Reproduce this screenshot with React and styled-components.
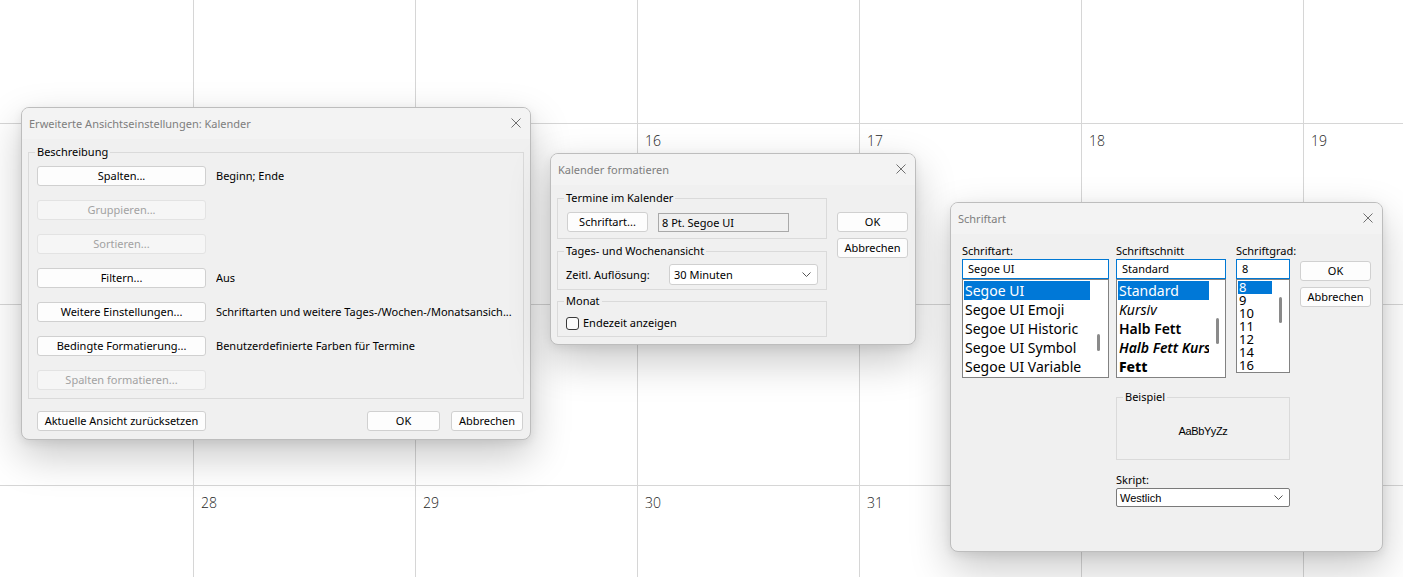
import React from "react";
import styled, { createGlobalStyle } from "styled-components";

const UI_FONT = `"Noto Sans", "Segoe UI", sans-serif`;
const CLASSIC_FONT = `"Liberation Sans", Arial, sans-serif`;

const GlobalStyle = createGlobalStyle`
  html, body { margin: 0; padding: 0; background: #fff; }
  body { overflow: hidden; font-family: ${UI_FONT}; }
  *, *::before, *::after { box-sizing: border-box; }
`;

/* ---------- Calendar background ---------- */

const Desktop = styled.div`
  position: relative;
  width: 1403px;
  height: 577px;
  overflow: hidden;
  background: #fff;
`;

const CalendarGrid = styled.div`
  display: grid;
  grid-template-columns: 193px repeat(5, 222px) 1fr;
  grid-template-rows: 123px 181px 181px 1fr;
  height: 100%;
`;

const DayCell = styled.div`
  border-left: ${({ $firstCol }) => ($firstCol ? "none" : "1px solid #d6d6d6")};
  border-top: ${({ $firstRow }) => ($firstRow ? "none" : "1px solid #d6d6d6")};
  padding: 8px 0 0 7px;
  font-family: "Open Sans", "Segoe UI", sans-serif;
  font-weight: 300;
  font-size: 14px;
  line-height: 18px;
  color: #1e1e1e;
`;

const weeks = [
  ["", "", "", "", "", "", ""],
  ["", "14", "15", "16", "17", "18", "19"],
  ["", "21", "22", "23", "24", "25", "26"],
  ["", "28", "29", "30", "31", "1", "2"],
];

/* ---------- Window chrome ---------- */

const Window = styled.section`
  position: absolute;
  left: ${({ $x }) => $x}px;
  top: ${({ $y }) => $y}px;
  width: ${({ $w }) => $w}px;
  height: ${({ $h }) => $h}px;
  display: flex;
  flex-direction: column;
  background: #f0f0f0;
  border: 1px solid #bdbdbd;
  border-radius: 8px;
  overflow: hidden;
  box-shadow: 0 16px 40px rgba(0, 0, 0, 0.22), 0 3px 10px rgba(0, 0, 0, 0.08);
  font-family: ${UI_FONT};
  font-size: 11px;
  line-height: 14px;
  color: #000;
`;

const TitleBar = styled.header`
  flex: none;
  height: 31px;
  display: flex;
  align-items: center;
  justify-content: space-between;
  padding: 0 9px 0 7px;
  background: #f3f3f3;
`;

const Title = styled.span`
  color: #7e7e7e;
  font-size: 11px;
`;

const CloseButton = styled.span`
  display: flex;
  width: 10px;
  height: 10px;
  margin-top: -2px;
`;

const CloseGlyph = () => (
  <CloseButton>
    <svg width="10" height="10" viewBox="0 0 10 10">
      <path d="M0.5 0.5L9.5 9.5M9.5 0.5L0.5 9.5" stroke="#6f6f6f" strokeWidth="1" />
    </svg>
  </CloseButton>
);

const Group = styled.fieldset`
  margin: ${({ $mt = 0 }) => $mt}px 0 0 0;
  padding: 0;
  border: 1px solid #dadada;
  min-width: 0;
`;

const Legend = styled.legend`
  margin-left: 6px;
  padding: 0 2px;
  font-size: 11px;
  line-height: 14px;
`;

const GroupContent = styled.div`
  padding: ${({ $pad }) => $pad};
`;

const Button = styled.button`
  flex: none;
  width: ${({ $w }) => $w}px;
  height: 20px;
  margin: 0;
  padding: 0;
  font-family: inherit;
  font-size: 11px;
  line-height: 18px;
  color: #000;
  background: #fdfdfd;
  border: 1px solid #d0d0d0;
  border-radius: 3px;
  &:disabled {
    color: #a2a2a2;
    background: #f6f6f6;
    border-color: #e3e3e3;
  }
`;

const Chevron = () => (
  <svg width="9" height="5" viewBox="0 0 9 5">
    <path d="M0.5 0.5L4.5 4.5L8.5 0.5" fill="none" stroke="#555" strokeWidth="1" />
  </svg>
);

const ComboBox = styled.div`
  flex: none;
  width: ${({ $w }) => $w}px;
  height: ${({ $h }) => $h}px;
  display: flex;
  align-items: center;
  justify-content: space-between;
  padding: 0 6px 0 ${({ $classic }) => ($classic ? 3 : 4)}px;
  background: #fff;
  border: 1px solid ${({ $classic }) => ($classic ? "#7a7a7a" : "#d0d0d0")};
  border-radius: ${({ $classic }) => ($classic ? 2 : 3)}px;
  font-family: ${({ $classic }) => ($classic ? CLASSIC_FONT : UI_FONT)};
  font-size: 11px;
`;

/* ---------- Dialog 1: Erweiterte Ansichtseinstellungen ---------- */

const SettingsBody = styled.div`
  flex: 1;
  padding: 6px 6px 8px 6px;
`;

const SettingsList = styled.div`
  display: flex;
  flex-direction: column;
  gap: 14px;
`;

const SettingRow = styled.div`
  display: flex;
  align-items: center;
  gap: 10px;
`;

const RowValue = styled.span`
  white-space: nowrap;
  overflow: hidden;
`;

const Footer = styled.div`
  display: flex;
  align-items: center;
  margin-top: 12px;
  padding: 0 1px 0 9px;
`;

const FooterActions = styled.div`
  display: flex;
  gap: 11px;
  margin-left: auto;
`;

const settings = [
  { label: "Spalten...", value: "Beginn; Ende" },
  { label: "Gruppieren...", disabled: true },
  { label: "Sortieren...", disabled: true },
  { label: "Filtern...", value: "Aus" },
  { label: "Weitere Einstellungen...", value: "Schriftarten und weitere Tages-/Wochen-/Monatsansich..." },
  { label: "Bedingte Formatierung...", value: "Benutzerdefinierte Farben für Termine" },
  { label: "Spalten formatieren...", disabled: true },
];

/* ---------- Dialog 2: Kalender formatieren ---------- */

const FormatBody = styled.div`
  flex: 1;
  display: flex;
  gap: 10px;
  padding: 6px 7px 6px 6px;
`;

const GroupColumn = styled.div`
  width: 270px;
  display: flex;
  flex-direction: column;
`;

const ActionColumn = styled.div`
  display: flex;
  flex-direction: column;
  gap: 6px;
  padding-top: ${({ $top }) => $top}px;
`;

const InlineRow = styled.div`
  display: flex;
  align-items: center;
  gap: ${({ $gap = 10 }) => $gap}px;
`;

const ReadonlyField = styled.div`
  width: 131px;
  height: 19px;
  padding-left: 3px;
  line-height: 17px;
  background: #f0f0f0;
  border: 1px solid #a9a9a9;
`;

const FieldLabel = styled.span`
  flex: none;
  width: ${({ $w }) => ($w ? `${$w}px` : "auto")};
`;

const Checkbox = styled.span`
  width: 13px;
  height: 13px;
  border: 1px solid #3a3a3a;
  border-radius: 3px;
  background: #fbfbfb;
`;

/* ---------- Dialog 3: Schriftart ---------- */

const FontBody = styled.div`
  flex: 1;
  display: grid;
  grid-template-columns: 144px 110px 54px 71px;
  column-gap: 10px;
  align-content: start;
  align-items: start;
  padding: 9px 11px 0 11px;
`;

const PickerColumn = styled.div`
  width: ${({ $w }) => $w}px;
  display: flex;
  flex-direction: column;
`;

const PickerLabel = styled.div`
  height: 16px;
  line-height: 16px;
  white-space: nowrap;
`;

const TextInput = styled.div`
  height: 20px;
  padding-left: 5px;
  line-height: 18px;
  background: #fff;
  border: 1px solid #0078d4;
  white-space: nowrap;
  overflow: hidden;
`;

const ListBox = styled.div`
  height: ${({ $h }) => $h}px;
  display: flex;
  background: #fff;
  border: 1px solid #828282;
  overflow: hidden;
`;

const ListItems = styled.div`
  flex: none;
  width: ${({ $w }) => $w}px;
  padding: 1px 0 0 1px;
  overflow: hidden;
`;

const ListItem = styled.div`
  height: ${({ $rowH }) => $rowH}px;
  line-height: ${({ $rowH }) => $rowH}px;
  padding-left: 1px;
  font-size: ${({ $size }) => $size}px;
  font-style: ${({ $italic }) => ($italic ? "italic" : "normal")};
  font-weight: ${({ $weight = 400 }) => $weight};
  white-space: nowrap;
  overflow: hidden;
  color: ${({ $selected }) => ($selected ? "#fff" : "#000")};
  background: ${({ $selected }) => ($selected ? "#0078d7" : "transparent")};
`;

const ScrollTrack = styled.div`
  flex: 1;
  padding: ${({ $offset }) => $offset}px 0 0 7px;
`;

const ScrollThumb = styled.div`
  width: 3px;
  height: ${({ $h }) => $h}px;
  border-radius: 2px;
  background: #8a8a8a;
`;

const WideCell = styled.div`
  grid-column: 2 / span 2;
  margin-top: 12px;
`;

const SampleArea = styled.div`
  height: 55px;
  display: flex;
  align-items: center;
  justify-content: center;
  font-family: ${CLASSIC_FONT};
  font-size: 11px;
  letter-spacing: -0.4px;
  padding-bottom: 1px;
`;

const ScriptLabel = styled.div`
  height: 16px;
  line-height: 16px;
`;

const fontFaces = ["Segoe UI", "Segoe UI Emoji", "Segoe UI Historic", "Segoe UI Symbol", "Segoe UI Variable"];
const fontStyles = [
  { name: "Standard" },
  { name: "Kursiv", italic: true },
  { name: "Halb Fett", weight: 600 },
  { name: "Halb Fett Kursiv", weight: 600, italic: true },
  { name: "Fett", weight: 800 },
];
const fontSizes = ["8", "9", "10", "11", "12", "14", "16"];

function Picker({ width, label, value, listH, itemsW, thumbTop, thumbH, children }) {
  return (
    <PickerColumn $w={width}>
      <PickerLabel>{label}</PickerLabel>
      <TextInput>{value}</TextInput>
      <ListBox $h={listH}>
        <ListItems $w={itemsW}>{children}</ListItems>
        <ScrollTrack $offset={thumbTop}>
          <ScrollThumb $h={thumbH} />
        </ScrollTrack>
      </ListBox>
    </PickerColumn>
  );
}

export default function App() {
  return (
    <>
      <GlobalStyle />
      <Desktop>
        <CalendarGrid>
          {weeks.map((week, r) =>
            week.map((d, c) => (
              <DayCell key={`${r}-${c}`} $firstRow={r === 0} $firstCol={c === 0}>
                {d}
              </DayCell>
            ))
          )}
        </CalendarGrid>

        <Window $x={21} $y={107} $w={510} $h={333}>
          <TitleBar>
            <Title>Erweiterte Ansichtseinstellungen: Kalender</Title>
            <CloseGlyph />
          </TitleBar>
          <SettingsBody>
            <Group>
              <Legend>Beschreibung</Legend>
              <GroupContent $pad="7px 8px 8px 8px">
                <SettingsList>
                  {settings.map((s) => (
                    <SettingRow key={s.label}>
                      <Button $w={169} disabled={s.disabled}>
                        {s.label}
                      </Button>
                      {s.value && <RowValue>{s.value}</RowValue>}
                    </SettingRow>
                  ))}
                </SettingsList>
              </GroupContent>
            </Group>
            <Footer>
              <Button $w={169}>Aktuelle Ansicht zurücksetzen</Button>
              <FooterActions>
                <Button $w={73}>OK</Button>
                <Button $w={72}>Abbrechen</Button>
              </FooterActions>
            </Footer>
          </SettingsBody>
        </Window>

        <Window $x={550} $y={153} $w={366} $h={192}>
          <TitleBar>
            <Title>Kalender formatieren</Title>
            <CloseGlyph />
          </TitleBar>
          <FormatBody>
            <GroupColumn>
              <Group>
                <Legend>Termine im Kalender</Legend>
                <GroupContent $pad="7px 8px 6px 9px">
                  <InlineRow>
                    <Button $w={81}>Schriftart...</Button>
                    <ReadonlyField>8 Pt. Segoe UI</ReadonlyField>
                  </InlineRow>
                </GroupContent>
              </Group>
              <Group $mt={5}>
                <Legend>Tages- und Wochenansicht</Legend>
                <GroupContent $pad="6px 8px 4px 8px">
                  <InlineRow $gap={0}>
                    <FieldLabel $w={103}>Zeitl. Auflösung:</FieldLabel>
                    <ComboBox $w={149} $h={21}>
                      30 Minuten
                      <Chevron />
                    </ComboBox>
                  </InlineRow>
                </GroupContent>
              </Group>
              <Group $mt={4}>
                <Legend>Monat</Legend>
                <GroupContent $pad="8px 8px 6px 8px">
                  <InlineRow $gap={4}>
                    <Checkbox />
                    <FieldLabel>Endezeit anzeigen</FieldLabel>
                  </InlineRow>
                </GroupContent>
              </Group>
            </GroupColumn>
            <ActionColumn $top={21}>
              <Button $w={71}>OK</Button>
              <Button $w={71}>Abbrechen</Button>
            </ActionColumn>
          </FormatBody>
        </Window>

        <Window $x={950} $y={202} $w={433} $h={350}>
          <TitleBar>
            <Title>Schriftart</Title>
            <CloseGlyph />
          </TitleBar>
          <FontBody>
            <Picker width={147} label="Schriftart:" value="Segoe UI" listH={99} itemsW={127} thumbTop={54} thumbH={17}>
              {fontFaces.map((f, i) => (
                <ListItem key={f} $rowH={19} $size={14} $selected={i === 0}>
                  {f}
                </ListItem>
              ))}
            </Picker>
            <Picker width={110} label="Schriftschnitt" value="Standard" listH={99} itemsW={92} thumbTop={38} thumbH={26}>
              {fontStyles.map((s, i) => (
                <ListItem key={s.name} $rowH={19} $size={14} $italic={s.italic} $weight={s.weight} $selected={i === 0}>
                  {s.name}
                </ListItem>
              ))}
            </Picker>
            <Picker width={54} label="Schriftgrad:" value="8" listH={94} itemsW={35} thumbTop={17} thumbH={26}>
              {fontSizes.map((s, i) => (
                <ListItem key={s} $rowH={13} $size={13} $selected={i === 0}>
                  {s}
                </ListItem>
              ))}
            </Picker>
            <ActionColumn $top={18}>
              <Button $w={71}>OK</Button>
              <Button $w={71}>Abbrechen</Button>
            </ActionColumn>

            <WideCell>
              <Group>
                <Legend>Beispiel</Legend>
                <SampleArea>AaBbYyZz</SampleArea>
              </Group>
            </WideCell>
            <WideCell>
              <ScriptLabel>Skript:</ScriptLabel>
              <ComboBox $classic $w={174} $h={19}>
                Westlich
                <Chevron />
              </ComboBox>
            </WideCell>
          </FontBody>
        </Window>
      </Desktop>
    </>
  );
}
